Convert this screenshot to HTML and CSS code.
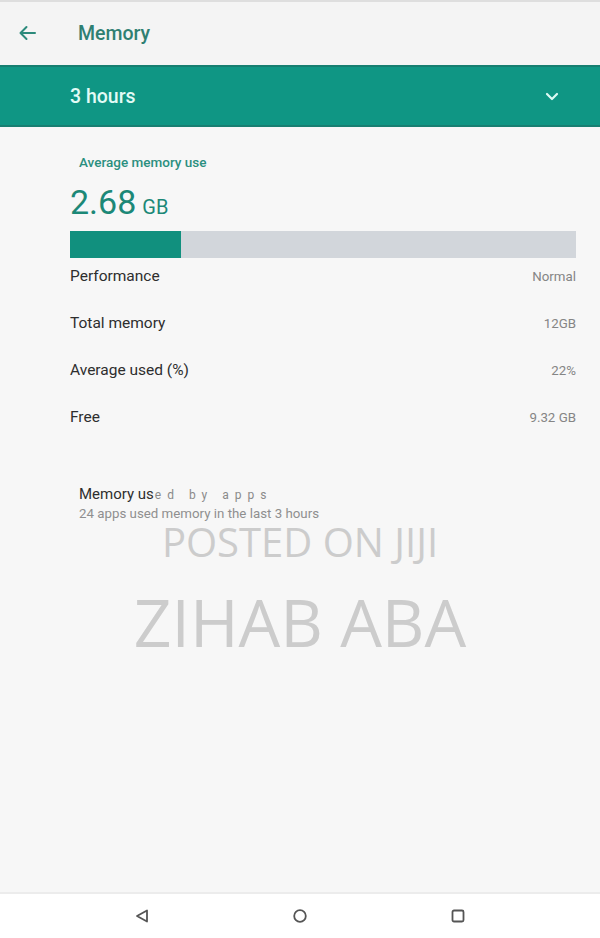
FILE: index.html
```html
<!DOCTYPE html>
<html>
<head>
<meta charset="utf-8">
<link rel="stylesheet" href="styles.css">
</head>
<body>
<div class="screen">
  <header class="topbar">
    <svg class="back" width="18" height="16" viewBox="0 0 18 16"><path d="M17 8H3M8.5 2L2.5 8l6 6" fill="none" stroke="#2c8a7b" stroke-width="2" stroke-linecap="round" stroke-linejoin="round"/></svg>
    <span class="title">Memory</span>
  </header>
  <div class="band">
    <span class="band-label">3 hours</span>
    <svg class="chev" width="14" height="9" viewBox="0 0 14 9"><path d="M2 2l5 5 5-5" fill="none" stroke="#dcfaf3" stroke-width="2.2" stroke-linecap="round" stroke-linejoin="round"/></svg>
  </div>
  <main class="content">
    <div class="avg-label">Average memory use</div>
    <div class="avg-value"><span class="num">2.68</span><span class="unit">GB</span></div>
    <div class="bar"><div class="bar-fill" style="width:22%"></div></div>
    <div class="rows">
      <div class="row"><span class="lbl">Performance</span><span class="val">Normal</span></div>
      <div class="row"><span class="lbl">Total memory</span><span class="val">12GB</span></div>
      <div class="row"><span class="lbl">Average used (%)</span><span class="val">22%</span></div>
      <div class="row"><span class="lbl">Free</span><span class="val">9.32 GB</span></div>
    </div>
    <div class="apps">
      <div class="apps-title">Memory us<span class="garble">ed by apps</span></div>
      <div class="apps-sub">24 apps used memory in the last 3 hours</div>
    </div>
    <div class="watermark">
      <div class="wm1">POSTED ON JIJI</div>
      <div class="wm2">ZIHAB ABA</div>
    </div>
  </main>
  <nav class="navbar">
    <svg width="16" height="16" viewBox="0 0 16 16"><path d="M13 2.5v11L3 8z" fill="none" stroke="#555" stroke-width="1.8" stroke-linejoin="round"/></svg>
    <svg width="16" height="16" viewBox="0 0 16 16"><circle cx="8" cy="8" r="5.8" fill="none" stroke="#555" stroke-width="1.8"/></svg>
    <svg width="16" height="16" viewBox="0 0 16 16"><rect x="2.5" y="2.5" width="11" height="11" rx="1.5" fill="none" stroke="#555" stroke-width="1.8"/></svg>
  </nav>
</div>
</body>
</html>
```
FILE: styles.css
```css
* { box-sizing: border-box; }
html, body { margin: 0; padding: 0; }
body { font-family: Roboto, "Liberation Sans", sans-serif; background: #f7f7f7; }
.screen { width: 600px; height: 938px; display: flex; flex-direction: column; background: #f7f7f7; }
.topbar {
  height: 65px; flex: none; display: flex; align-items: center;
  background: #f4f4f4; border-top: 2px solid #dedede; padding-left: 18px;
}
.back { margin-right: 42px; margin-top: -1px; }
.title { font-size: 19.5px; font-weight: 500; color: #2f7f72; }
.band {
  height: 62px; flex: none; display: flex; align-items: center; justify-content: space-between;
  background: #0f9684; border-top: 2px solid #167e70; border-bottom: 2px solid #187f72;
  padding: 0 41px 0 70px;
}
.band-label { font-size: 19.5px; font-weight: 500; color: #e2fbf6; }
.content { flex: 1; padding: 0 24px 0 70px; position: relative; }
.avg-label { font-size: 13.5px; font-weight: 500; color: #2b8f7f; margin: 27px 0 0 9px; line-height: 16px; }
.avg-value { color: #1c8877; margin-top: 13px; line-height: 38px; display: flex; align-items: baseline; }
.num { font-size: 34px; }
.unit { font-size: 20px; margin-left: 6px; }
.bar { height: 27px; background: #d2d6db; margin-top: 5px; }
.bar-fill { height: 100%; background: #11907e; }
.rows { display: flex; flex-direction: column; }
.row { height: 47px; display: flex; justify-content: space-between; align-items: flex-start; padding-top: 9px; }
.lbl { font-size: 15.5px; color: #2e2e2e; line-height: 18px; }
.val { font-size: 13.3px; color: #858585; line-height: 18px; margin-top: 1px; }
.apps { margin: 38px 0 0 9px; }
.apps-title { font-size: 15px; color: #2e2e2e; line-height: 20px; }
.garble { font-size: 12px; color: #8a8a8a; letter-spacing: 6px; margin-left: 1px; }
.apps-sub { font-size: 13.3px; color: #8f8f8f; line-height: 16px; margin-top: 1px; }
.watermark { position: absolute; left: 0; right: 0; top: 395px; text-align: center; font-family: "Open Sans", sans-serif; color: #cccccc; pointer-events: none; }
.wm1 { font-size: 40px; line-height: 40px; }
.wm2 { font-size: 66px; line-height: 80px; margin-top: 19px; }
.navbar {
  height: 46px; flex: none; background: #ffffff; border-top: 2px solid #ececec;
  display: flex; align-items: center; justify-content: center; gap: 142px;
}
```
